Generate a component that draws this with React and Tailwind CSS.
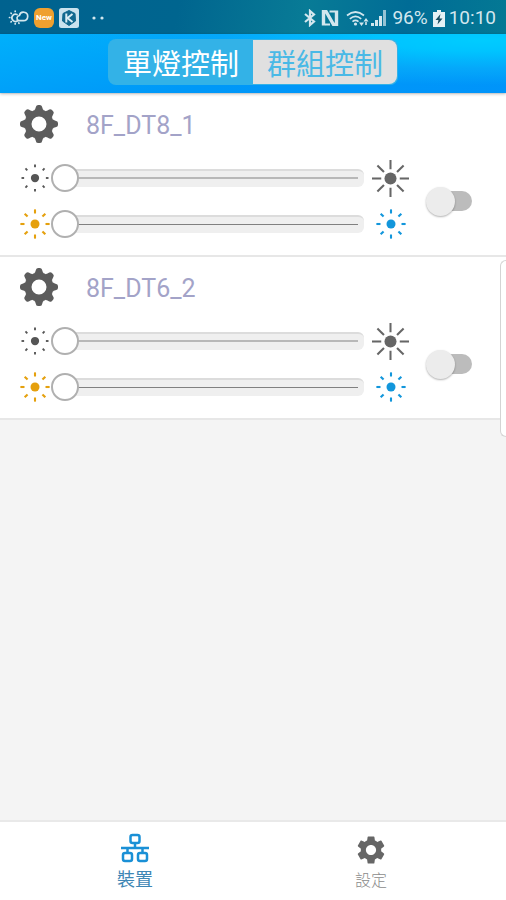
import React, { useState } from "react";
import { MdSettings } from "react-icons/md";

const devices = [
  { id: "dt8-1", name: "8F_DT8_1" },
  { id: "dt6-2", name: "8F_DT6_2" },
];

const angles = [0, 45, 90, 135, 180, 225, 270, 315];

// Dot with eight rays, "from" and "to" are the ray's distances from the centre
function Sun({ size, dot, from, to, stroke, className }) {
  return (
    <svg
      className={className}
      width={size}
      height={size}
      viewBox="-20 -20 40 40"
      stroke="currentColor"
      strokeWidth={stroke}
      aria-hidden="true"
    >
      <circle r={dot} fill="currentColor" stroke="none" />
      {angles.map((angle) => (
        <path
          key={angle}
          d={`M0 ${-from}V${-to}`}
          transform={`rotate(${angle})`}
        />
      ))}
    </svg>
  );
}

function Gear() {
  return (
    <svg
      className="size-[38px] text-[#5c5c5c]"
      viewBox="-19 -19 38 38"
      aria-hidden="true"
    >
      <circle r="11" fill="none" stroke="currentColor" strokeWidth="7" />
      {angles.map((angle) => (
        <path
          key={angle}
          d="M-5 -13.500Q-3.600 -14.500 -3.300 -16.500Q-3 -19 -1 -19H1Q3 -19 3.300 -16.500Q3.600 -14.500 5 -13.500Z"
          fill="currentColor"
          transform={`rotate(${angle})`}
        />
      ))}
    </svg>
  );
}

function StatusBar() {
  return (
    <div className="flex h-[34px] items-center justify-between bg-[linear-gradient(100deg,#00628f_0%,#00658f_35%,#087b96_60%,#006c96_80%,#047994_100%)] pl-2 pr-[10px] pt-[2px] text-[#d3e7ee]">
      <div className="flex items-center gap-[5px]">
        <svg className="h-5 w-[21px]" viewBox="0 0 21 20" fill="none" stroke="currentColor" strokeWidth="1.7" strokeLinecap="round" aria-hidden="true">
          <path d="M9 6.6A3.6 3.6 0 1 0 9.6 12.8" />
          <path d="M1.5 9.5h.3M3 5.2l.3.3M7.2 3.2v.3M3 14l.3-.3M7.2 16v-.4M11 15.3l-.2-.3" />
          <path d="M10.500 12.600H15.500a4.200 4.200 0 1 0-4.100-5.100A2.700 2.700 0 0 0 10.500 12.600Z" />
        </svg>
        <span className="flex size-5 items-center justify-center rounded-md bg-[#efa02f] font-['Roboto',sans-serif] text-[8px] font-bold text-white">
          New
        </span>
        <svg className="size-5" viewBox="0 0 20 20" aria-hidden="true">
          <rect width="20" height="20" rx="2.5" fill="#c9e2ee" />
          <path d="M10 2.5 16 5.5 16.5 13 10 17.5 3.5 13 4 5.5Z" fill="#11688f" stroke="#11688f" strokeLinejoin="round" />
          <path d="M7.3 5.5v9M13.5 6 8.5 10l5 4" fill="none" stroke="#d9edf5" strokeWidth="2" />
        </svg>
        <svg className="ml-2 h-1 w-3" viewBox="0 0 12 4" fill="currentColor" aria-hidden="true">
          <circle cx="2" cy="2" r="1.6" />
          <circle cx="10" cy="2" r="1.6" />
        </svg>
      </div>
      <div className="flex items-center font-['Roboto',sans-serif] text-[19px] leading-6">
        <svg className="h-[18px] w-[14px]" viewBox="0 0 14 18" fill="none" stroke="currentColor" strokeWidth="2.2" aria-hidden="true">
          <path d="M2 5 11 12.500 7 16V2L11 5.500 2 13" />
        </svg>
        <svg className="ml-1 h-4 w-[18px]" viewBox="0 0 18 16" fill="none" stroke="currentColor" strokeWidth="3.4" aria-hidden="true">
          <path d="M2.500 15.500V1.500H5L12.500 14.500H15.500V.5" />
          <path d="M8.500 1.500H14M4 14.500H9" strokeWidth="2" />
        </svg>
        <svg className="ml-[7px] h-[18px] w-6" viewBox="0 0 24 18" fill="none" stroke="currentColor" strokeWidth="1.7" aria-hidden="true">
          <path d="M1 6.5Q9.500-.5 18 6.500M3.800 9.800Q9.500 5 15.200 9.800M6.500 12.600Q9.500 10.200 12.500 12.600" />
          <circle cx="9.500" cy="15" r="1.600" fill="currentColor" stroke="none" />
          <path d="M13 13.500 15.500 17 18 13.500ZM17.500 12.500 20 9 22.500 12.500ZM19.200 12v4h1.600v-4Z" fill="currentColor" stroke="none" />
        </svg>
        <svg className="h-[18px] w-[18px]" viewBox="0 0 18 18" fill="currentColor" aria-hidden="true">
          <path d="M1 14h3v3H1ZM5 11h3v6H5ZM9 7h3v10H9Z" />
          <path d="M13 1h3v16h-3Z" opacity=".7" />
        </svg>
        <span className="ml-1">96%</span>
        <svg className="ml-[5px] h-[17px] w-3" viewBox="0 0 12 17" aria-hidden="true">
          <path d="M4 0h4v2h4v15H0V2h4Z" fill="#e4f1f5" />
          <path d="M7.500 4 2.500 10H5.500L4.500 14.500 9.500 8.500H6.500Z" fill="#174d60" />
        </svg>
        <span className="ml-1">10:10</span>
      </div>
    </div>
  );
}

function Slider({ label, lineClass }) {
  const [value, setValue] = useState(0);

  return (
    <div className="grid min-w-0 flex-1 items-center">
      <div className="ml-3 flex h-[18px] items-center rounded-md border-t-2 border-[#dcdcdc] bg-[#efefef] pb-[2px] pr-[6px] [grid-area:1/1]">
        <div className={`w-full ${lineClass}`}></div>
      </div>
      <input
        type="range"
        min="0"
        max="100"
        value={value}
        aria-label={label}
        onChange={(event) => setValue(Number(event.target.value))}
        className="h-7 w-full min-w-0 cursor-pointer appearance-none bg-transparent [grid-area:1/1] [&::-webkit-slider-thumb]:size-7 [&::-webkit-slider-thumb]:appearance-none [&::-webkit-slider-thumb]:rounded-full [&::-webkit-slider-thumb]:border-2 [&::-webkit-slider-thumb]:border-[#b0b0b0] [&::-webkit-slider-thumb]:bg-white"
      />
    </div>
  );
}

function DeviceCard({ name }) {
  const [on, setOn] = useState(false);

  return (
    <section className="border-b-2 border-[#e7e7e7] bg-white pb-[13px] pl-5 pr-[34px] pt-[11px]">
      <div className="flex h-[38px] items-center gap-[28px]">
        <button type="button" aria-label={`${name} 設定`}>
          <Gear />
        </button>
        <h2 className="pt-1 font-['Roboto',sans-serif] text-[25px] leading-8 text-[#a3a3c8]">
          {name}
        </h2>
      </div>
      <div className="mt-[17px] flex items-center gap-[25px]">
        <div className="flex flex-1 flex-col gap-[10px]">
          <div className="flex h-9 items-center">
            <Sun size={30} dot={5.5} from={14.5} to={18} stroke={2.5} className="mr-[1px] shrink-0 text-[#555555]" />
            <Slider label={`${name} 亮度`} lineClass="h-[2px] bg-[#b8b8b8]" />
            <Sun size={37} dot={6.5} from={10} to={20} stroke={2.2} className="ml-2 shrink-0 text-[#666666]" />
          </div>
          <div className="flex h-9 items-center">
            <Sun size={30} dot={6} from={14} to={19.5} stroke={2.8} className="mr-[1px] shrink-0 text-[#e5a00d]" />
            <Slider label={`${name} 色溫`} lineClass="h-px bg-[#808080]" />
            <div className="ml-2 flex w-[37px] shrink-0 justify-center">
              <Sun size={30} dot={6} from={14} to={19.5} stroke={2.8} className="text-[#1296db]" />
            </div>
          </div>
        </div>
        <input
          type="checkbox"
          role="switch"
          aria-label={`${name} 開關`}
          checked={on}
          onChange={() => setOn(!on)}
          className="relative h-5 w-[38px] shrink-0 cursor-pointer appearance-none rounded-full bg-[#bcbcbc] before:absolute before:-left-2 before:-top-1 before:size-[29px] before:rounded-full before:bg-[#ececec] before:shadow-[0_1px_2px_rgba(0,0,0,0.3)] checked:bg-[#8fd3f4] checked:before:left-4"
        />
      </div>
    </section>
  );
}

function App() {
  const [tab, setTab] = useState("single");

  return (
    <div className="relative flex min-h-screen flex-col bg-[#f4f4f4] font-['Noto_Sans_CJK_TC',sans-serif]">
      <StatusBar />
      <header className="z-10 flex h-[59px] justify-center bg-[radial-gradient(ellipse_at_95%_10%,#00ccff_0%,#00c4ff_15%,#05a8fa_38%,transparent_60%),linear-gradient(170deg,#00b0fb_0%,#0098f8_60%,#0094fa_100%)] pt-[5px] shadow-[0_1px_3px_rgba(0,0,0,0.25)]">
        <div className="flex h-[46px] w-[290px] overflow-hidden rounded-lg bg-[#33b2e7] p-px text-[29px] leading-[44px]">
          <button
            type="button"
            aria-pressed={tab === "single"}
            onClick={() => setTab("single")}
            className="flex-1 text-white"
          >
            單燈控制
          </button>
          <button
            type="button"
            aria-pressed={tab === "group"}
            onClick={() => setTab("group")}
            className="flex-1 rounded-r-lg bg-[#e0e0e0] text-[#4ab9e6]"
          >
            群組控制
          </button>
        </div>
      </header>

      <main className="flex-1 pt-[1px]">
        {devices.map((device) => (
          <DeviceCard key={device.id} name={device.name} />
        ))}
      </main>

      {/* Edge panel handle */}
      <div className="absolute right-0 top-[260px] h-[177px] w-[6px] rounded-l-md border border-r-0 border-[#d4d4d4] bg-white"></div>

      <nav className="grid h-20 grid-cols-2 border-t-2 border-[#e9e9e9] bg-white px-[17px]">
        <a href="#devices" className="flex flex-col items-center pt-[11px] text-lg leading-6 text-[#3f87b5]">
          <svg className="size-[30px] text-[#1a90d6]" viewBox="0 0 30 30" fill="none" stroke="currentColor" strokeWidth="2.5" aria-hidden="true">
            <rect x="10.500" y="2" width="9" height="8" rx="2" />
            <rect x="3" y="20" width="9" height="8" rx="2" />
            <rect x="18" y="20" width="9" height="8" rx="2" />
            <path d="M15 10v5M1 15h28M7.500 15v5M22.500 15v5" />
          </svg>
          <span className="mt-[3px]">裝置</span>
        </a>
        <a href="#settings" className="flex flex-col items-center pt-[11px] text-base font-light leading-6 text-[#8c8c8c]">
          <MdSettings className="size-[34px] text-[#666666]" />
          <span>設定</span>
        </a>
      </nav>
    </div>
  );
}

export default App;
